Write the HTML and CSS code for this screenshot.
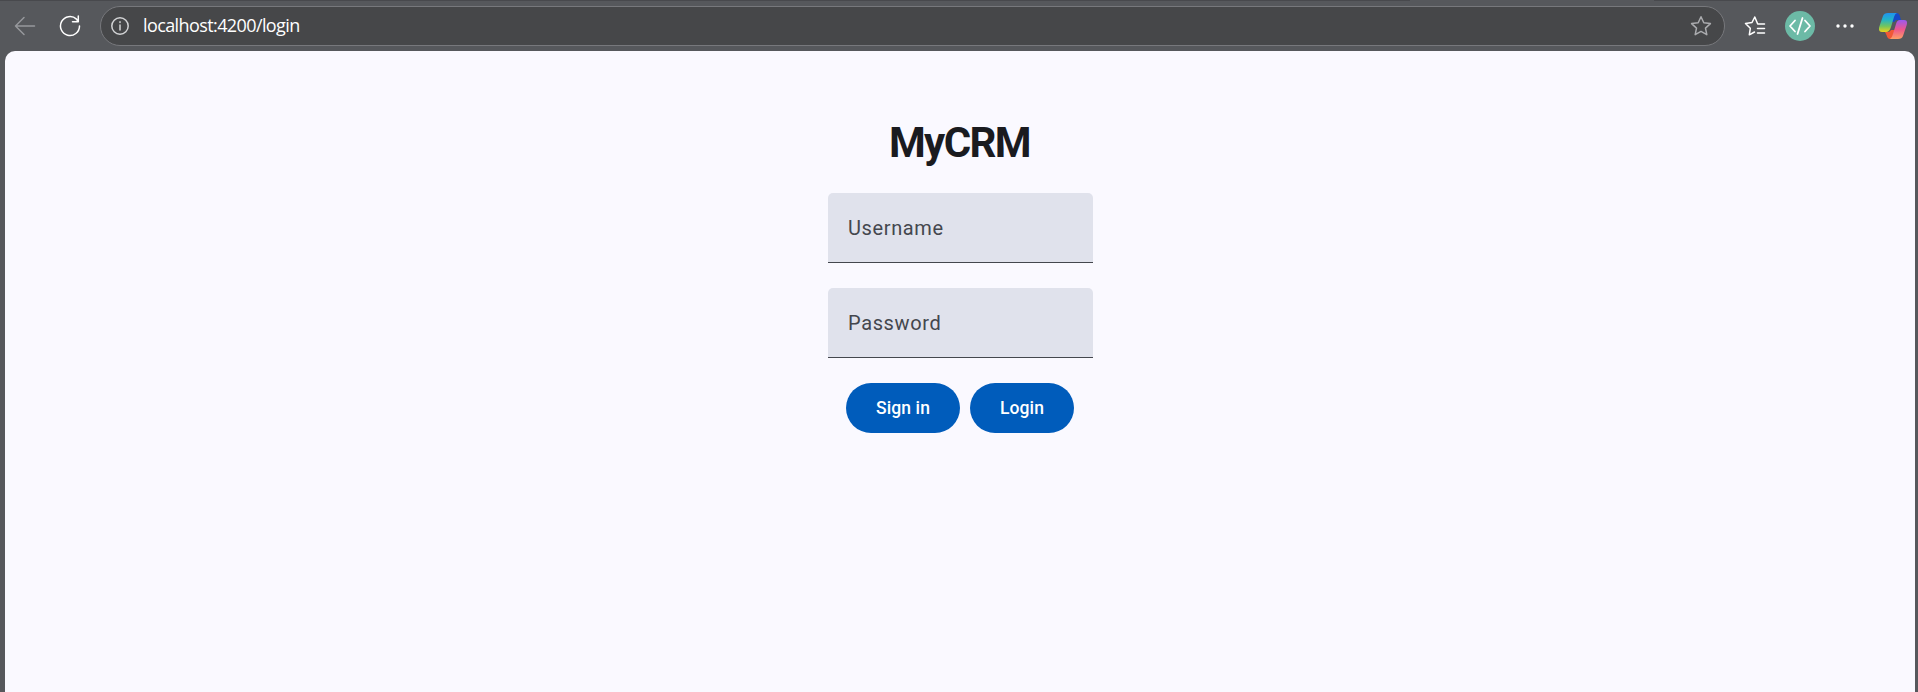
FILE: index.html
```html
<!DOCTYPE html>
<html lang="en">
<head>
<meta charset="utf-8">
<title>MyCRM</title>
<link rel="stylesheet" href="styles.css">
</head>
<body>
<div class="window">
  <header class="toolbar">
    <svg class="back" width="22" height="20" viewBox="0 0 22 20"><path d="M20.500 10H1.500M10 1.500L1.500 10L10 18.500"/></svg>
    <svg class="reload" width="22" height="22" viewBox="0 0 22 22"><path d="M20.500 11A9.500 9.500 0 1 1 17.500 4.100L19 6.500M19.300 1V6.800H13.500"/></svg>
    <div class="address">
      <svg class="info" width="18" height="18" viewBox="0 0 18 18"><circle cx="9" cy="9" r="8.200"/><path d="M9 8V13M9 4.800V5.600"/></svg>
      <span class="url">localhost:4200/login</span>
      <svg class="star" width="22" height="22" viewBox="0 0 22 22"><path d="M11 1.800L13.800 7.800L20.400 8.600L15.500 13.100L16.800 19.700L11 16.400L5.200 19.700L6.500 13.100L1.600 8.600L8.200 7.800Z"/></svg>
    </div>
    <svg class="favorites" width="22" height="22" viewBox="0 0 22 22"><path d="M20.500 9H13.700L10.800 2L8 7.500L1.500 8.500L6.300 13.300L5.300 19.800L10.500 17M13.500 13.500H20.500M13.500 18H20.500"/></svg>
    <div class="profile"><svg width="24" height="20" viewBox="0 0 24 20"><path d="M7 4.500L2 10L7 15.500M17 4.500L22 10L17 15.500M14.500 2L9.500 18"/></svg></div>
    <svg class="more" width="18" height="4" viewBox="0 0 18 4"><circle cx="2" cy="2" r="1.700"/><circle cx="9" cy="2" r="1.700"/><circle cx="16" cy="2" r="1.700"/></svg>
    <svg class="copilot" width="28" height="26" viewBox="0 0 28 26">
      <defs>
        <linearGradient id="cool" x1="0" y1="0" x2="0" y2="1"><stop offset="0" stop-color="#2093ef"/><stop offset=".35" stop-color="#22b3c8"/><stop offset=".7" stop-color="#74c55d"/><stop offset="1" stop-color="#ecd21c"/></linearGradient>
        <linearGradient id="warm" x1="0" y1="0" x2="0" y2="1"><stop offset="0" stop-color="#9959ef"/><stop offset=".5" stop-color="#ee578d"/><stop offset="1" stop-color="#ff9e65"/></linearGradient>
      </defs>
      <path fill="#1649c7" d="M14 0H18Q20 0 20.700 2.500L22 7H18Q16 7 15.300 9L12 9Z"/>
      <path fill="#f15836" d="M6 19H9Q11 19 12 17H16L14 26H11Q8.500 26 7.500 22Z"/>
      <path fill="url(#cool)" d="M9 0H18Q16 .500 15 4L12 14Q10.500 19 7 19H3Q-1 19 .200 14L4 3Q5 0 9 0Z"/>
      <path fill="url(#warm)" d="M21 7H25Q29 7 27.700 12L24 23Q23 26 19 26H11Q13 25 14 21L17 11Q18 7 21 7Z"/>
    </svg>
  </header>
  <main class="page">
    <form class="login">
      <h1 class="title">MyCRM</h1>
      <label class="field">Username</label>
      <label class="field">Password</label>
      <div class="actions">
        <button class="button sign-in" type="button">Sign in</button>
        <button class="button log-in" type="button">Login</button>
      </div>
    </form>
  </main>
</div>
</body>
</html>
```

FILE: styles.css
```css
* { box-sizing: border-box; }
body { margin: 0; background: #56585c; font-family: Roboto, sans-serif; }
.window { height: 692px; padding: 0 3px 0 5px; display: flex; flex-direction: column; overflow: hidden; }
.toolbar { height: 51px; flex: none; display: flex; align-items: center; margin: 0 -3px 0 -5px; padding: 0 11px 0 14px; background: linear-gradient(90deg, #48494d 1410px, transparent 1410px 1654px, #48494d 1654px) top / 100% 1px no-repeat; }
svg { flex: none; fill: none; stroke: #fff; stroke-width: 1.5; stroke-linecap: round; stroke-linejoin: round; }
.back { stroke: #96989c; }
.reload { margin-left: 23px; }
.address { width: 1626px; height: 40px; margin-left: 19px; padding: 0 12px 0 10px; display: flex; align-items: center; border: 1px solid #77787c; border-radius: 20px; background: #464749; }
.info { stroke: #d2d3d5; }
.url { margin-left: 14px; padding-bottom: 2px; font-family: "Open Sans", "Noto Sans", sans-serif; font-size: 18px; letter-spacing: -.6px; color: #fff; }
.star { margin-left: auto; stroke: #aaabae; }
.favorites { margin-left: 19px; }
.profile { width: 30px; height: 30px; margin-left: 19px; display: grid; place-items: center; border-radius: 50%; background: #6cbaa6; }
.profile svg { stroke-width: 1.8; }
.more { margin-left: 21px; fill: #fff; stroke: none; }
.copilot { margin-left: 25px; stroke: none; }
.page { flex: 1; background: #faf9ff; border-radius: 10px 10px 0 0; display: flex; justify-content: center; align-items: flex-start; }
.login { width: 264px; padding-top: 67px; display: flex; flex-direction: column; align-items: stretch; }
.title { margin: 0 0 25px; padding-right: 1px; text-align: center; font-size: 42px; line-height: 49px; padding-bottom: 1px; font-weight: 700; letter-spacing: -1.600px; color: #1a1b1f; }
.field { width: 265px; height: 70px; margin-bottom: 25px; padding: 0 20px; display: flex; align-items: center; border-bottom: 1px solid #44474e; border-radius: 5px 5px 0 0; background: #e0e2ec; color: #44474e; font-size: 20px; letter-spacing: .625px; }
.actions { display: flex; justify-content: center; gap: 10px; }
.button { height: 50px; padding: 0; border: 0; border-radius: 25px; background: #005cbb; color: #fff; font: 500 17.500px Roboto, sans-serif; letter-spacing: .125px; }
.sign-in { width: 114px; }
.log-in { width: 104px; }
```
